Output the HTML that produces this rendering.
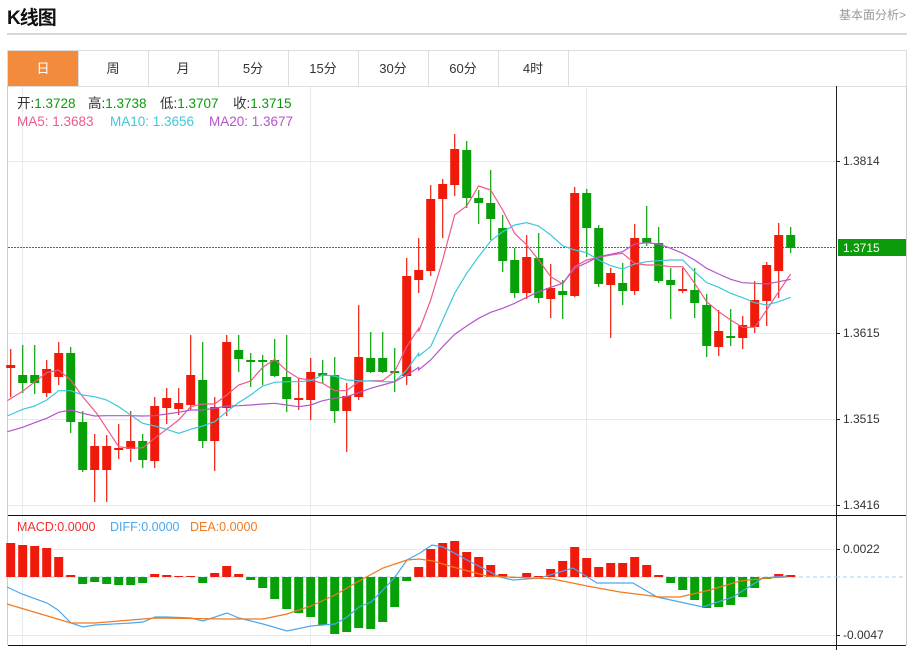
<!DOCTYPE html>
<html><head><meta charset="utf-8">
<style>
body{margin:0;background:#fff;width:914px;height:650px;overflow:hidden;font-family:"Liberation Sans","Noto Sans CJK SC",sans-serif;}
#t{position:absolute;left:7px;top:3px;font-size:19px;font-weight:bold;color:#111;letter-spacing:-1px}
#r{position:absolute;left:839px;top:6px;font-size:12px;color:#999}
#sep{position:absolute;left:7px;top:33px;width:900px;height:2px;background:#d8d8d8}
svg{position:absolute;left:0;top:0}
</style></head><body>
<div id="t">K线图</div>
<div id="r">基本面分析&gt;</div>
<div id="sep"></div>
<svg id="s" width="914" height="650" xmlns="http://www.w3.org/2000/svg" font-family="Liberation Sans, Noto Sans CJK SC, sans-serif"></svg>
<script>
var s=document.getElementById('s'),h='';
function L(x1,y1,x2,y2,c,w,d){h+='<line x1="'+x1+'" y1="'+y1+'" x2="'+x2+'" y2="'+y2+'" stroke="'+c+'" stroke-width="'+(w||1)+'"'+(d?' stroke-dasharray="'+d+'"':'')+'/>';}
function R(x,y,w,hh,c){h+='<rect x="'+x+'" y="'+y+'" width="'+w+'" height="'+hh+'" fill="'+c+'"/>';}
function T(x,y,t,c,sz,a){h+='<text x="'+x+'" y="'+y+'" fill="'+c+'" font-size="'+(sz||12)+'"'+(a?' text-anchor="'+a+'"':'')+'>'+t+'</text>';}
R(7,50,900,36,'#fff');
h+='<rect x="7.5" y="50.5" width="899" height="36" fill="none" stroke="#ddd"/>';
R(8,51,70,35,'#f28c3c');
var tabs=['日','周','月','5分','15分','30分','60分','4时'];
for(var i=0;i<8;i++){var x=8+70*i;L(x+70.5,51,x+70.5,86,'#ddd');T(x+35,73,tabs[i],i==0?'#fff':'#333',13,'middle');}
L(7.5,86,7.5,645,'#ccc');L(906.5,86,906.5,645,'#ccc');
[22.5,310.5,586.5].forEach(function(x){L(x,87,x,645,'#e3eaf0');});
[161.5,333.5,419.5,505.5,549.5,635.5].forEach(function(y){L(8,y,836,y,'#e3eaf0');});
L(836.5,86,836.5,650,'#222');
L(8,515.5,906,515.5,'#111');L(8,645.5,906,645.5,'#111');
[[161,'1.3814'],[333,'1.3615'],[419,'1.3515'],[505,'1.3416'],[549,'0.0022'],[635,'-0.0047']].forEach(function(a){L(836,a[0]+.5,840,a[0]+.5,'#222');T(843,a[0]+4,a[1],'#333',12);});
L(8,247.5,836,247.5,'#0a0',1,'2,1');
R(838,239,68,17,'#0a9a0a');T(843,252,'1.3715','#fff',12);
var C=[['r',365,368,349,397],['g',375,383,345,393],['g',375,383,345,394],['r',369,393,360,397],['r',353,377,342,385],['g',353,422,347,433],['g',422,470,411,472],['r',446,470,434,502],['r',446,470,435,502],['r',448,450,424,459],['r',441,449,411,462],['g',441,460,434,468],['r',406,461,397,468],['r',398,408,388,424],['r',403,409,388,415],['r',375,405,335,410],['g',380,441,342,448],['r',407,441,397,471],['r',342,408,335,416],['g',350,359,335,372],['g',360,362,353,387],['g',360,362,355,385],['g',360,376,339,377],['g',377,399,335,412],['r',398,400,378,410],['r',372,400,358,420],['g',373,376,360,383],['g',375,411,357,423],['r',396,411,383,452],['r',357,397,305,400],['g',358,372,332,373],['g',358,372,332,373],['g',371,373,348,392],['r',276,376,258,385],['r',270,280,238,293],['r',199,271,185,276],['r',184,199,179,238],['r',149,185,134,196],['g',150,198,141,208],['g',198,203,190,224],['g',203,219,170,240],['g',228,261,215,272],['g',260,293,248,298],['r',257,293,235,299],['g',258,298,233,303],['r',288,299,264,318],['g',291,295,280,319],['r',193,296,187,297],['g',193,228,189,257],['g',228,284,225,287],['r',273,285,268,338],['g',283,291,263,305],['r',238,291,224,295],['g',238,243,206,246],['g',243,281,227,283],['g',280,285,268,319],['r',289,291,268,293],['g',290,303,268,318],['g',305,346,294,357],['r',331,347,310,356],['g',336,338,309,346],['r',325,338,316,349],['r',300,327,281,333],['r',265,301,262,326],['r',235,271,223,298],['g',235,248,227,253]];
C.forEach(function(c,i){var x=10.7+12*i,col=c[0]=='r'?'#f01a0a':'#08a008';L(x,c[3],x,c[4],col,1.2);R(x-4.5,c[1],9,Math.max(2,c[2]-c[1]),col);});
function P(a3,a4,col){var p=[];a3.forEach(function(q){p.push((q[0]/3)+','+(120+q[1]/3));});a4.forEach(function(q){p.push((400+q[0]/3)+','+(120+q[1]/3));});h+='<polyline points="'+p.join(' ')+'" fill="none" stroke="'+col+'" stroke-width="1.2"/>';}
function pr(a){var r=[];for(var i=0;i<a.length;i+=2)r.push([a[i],a[i+1]]);return r;}
P(pr([22,842,66,815,140,758,176,750,212,780,248,830,290,880,356,980,392,985,428,983,464,955,536,900,572,860,608,852,644,852,680,825,716,795,752,783,788,742,824,718,860,752,896,775,932,780,968,790,1004,812,1040,812,1076,785,1112,782,1148,782,1184,755,1220,680,1256,625]),pr([56,635,92,540,128,420,164,285,200,258,236,198,272,210,308,270,344,340,380,375,416,420,452,470,488,492,524,440,560,420,596,412,632,405,668,400,704,430,740,435,776,435,812,440,848,440,884,490,920,545,956,575,992,600,1028,622,1064,622,1100,570,1136,515,1172,462]),'#ee5a8a');
P(pr([22,888,68,868,104,858,140,840,176,812,212,812,248,825,284,830,320,840,356,860,392,885,428,910,464,918,500,928,536,940,572,928,608,918,644,905,680,875,716,848,752,825,788,798,824,787,860,785,896,785,932,782,968,765,1004,768,1040,780,1076,782,1112,783,1148,785,1184,785,1220,750,1256,700]),pr([56,708,92,680,128,600,164,520,200,460,236,410,272,363,308,335,344,315,380,308,416,318,452,345,488,377,524,390,560,398,596,420,632,437,668,447,704,432,740,425,776,422,812,420,848,420,884,455,920,488,956,502,992,520,1028,533,1064,548,1100,555,1136,545,1172,532]),'#3ec8dc');
P(pr([22,935,68,922,104,908,140,895,176,877,212,870,248,880,284,888,320,887,356,887,392,887,428,888,464,887,500,882,536,877,572,870,608,870,644,865,680,858,716,857,752,855,788,852,824,850,860,855,896,860,932,855,968,842,1004,835,1040,830,1076,818,1112,805,1148,795,1184,785,1220,765,1256,742]),pr([56,750,92,720,128,680,164,643,200,618,236,595,272,577,308,565,344,550,380,532,416,515,452,502,488,490,524,445,560,428,596,410,632,403,668,395,704,372,740,368,776,372,812,385,848,400,884,420,920,445,956,462,992,478,1028,488,1064,490,1100,492,1136,485,1172,478]),'#b455cc');
L(8,577,836,577,'#9fd8ee',1,'4,3');L(836,577,906,577,'#9fd8ee',1,'4,3');
var M=[543,545,546,548,557,575,584,582,584,585,585,583,574,575,576,576,583,573,566,574,580,588,599,609,613,617,625,634,632,628,629,622,607,581,567,549,543,541,552,557,565,574,578,573,576,569,561,547,558,567,563,563,557,565,575,583,590,600,608,607,605,597,588,579,574,575];
M.forEach(function(v,i){var x=10.7+12*i-4.5;if(v<577)R(x,v,9,577-v,'#f01a0a');else R(x,577,9,Math.max(1,v-577),'#08a008');});
function PL(a,col){var p=[];for(var i=0;i<a.length;i+=2)p.push(a[i]+','+a[i+1]);h+='<polyline points="'+p.join(' ')+'" fill="none" stroke="'+col+'" stroke-width="1.2"/>';}
PL([7,587,22,594,47,603,58,610,71,623,83,627,95,625,131,623,143,622,155,617,167,617,191,618,203,621,227,613,239,618,263,624,287,631,311,626,335,624,347,617,359,607,371,602,383,590,395,577,407,560,420,553,432,545,443,547,467,560,500,577,513,580,540,578,573,568,597,583,633,583,657,597,703,607,733,597,763,578,787,576],'#4aa8ee');
PL([7,604,71,623,95,623,131,620,155,618,227,619,263,619,287,614,311,606,335,595,359,581,383,568,395,564,407,560,419,559,433,561,453,567,487,576,553,579,587,586,620,592,660,597,680,597,710,590,740,581,767,578,787,577],'#f07a20');
h+='<text y="108" font-size="13.5" fill="#333"><tspan x="17">开:<tspan fill="#0a9a0a">1.3728</tspan></tspan><tspan x="88">高:<tspan fill="#0a9a0a">1.3738</tspan></tspan><tspan x="160">低:<tspan fill="#0a9a0a">1.3707</tspan></tspan><tspan x="233">收:<tspan fill="#0a9a0a">1.3715</tspan></tspan></text>';
h+='<text y="126" font-size="13.5"><tspan x="17" fill="#ee5a8a">MA5: 1.3683</tspan><tspan x="110" fill="#3ec8dc">MA10: 1.3656</tspan><tspan x="209" fill="#b455cc">MA20: 1.3677</tspan></text>';
h+='<text y="531" font-size="12.5"><tspan x="17" fill="#f03030">MACD:0.0000</tspan><tspan x="110" fill="#4aa8ee">DIFF:0.0000</tspan><tspan x="190" fill="#f07a20">DEA:0.0000</tspan></text>';
s.innerHTML=h;
</script>
</body></html>
